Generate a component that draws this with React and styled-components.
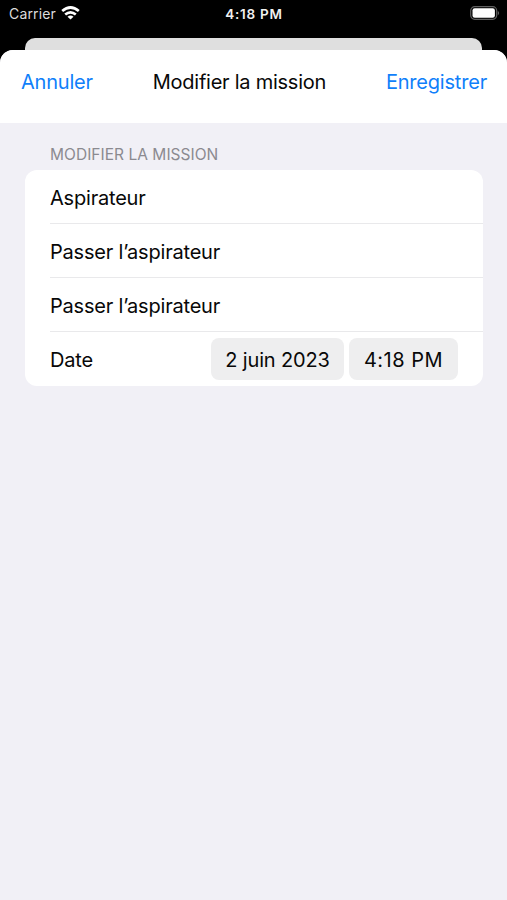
import React from 'react';
import styled, { createGlobalStyle } from 'styled-components';

const GlobalStyle = createGlobalStyle`
  * { box-sizing: border-box; }
  body { margin: 0; background: #000; font-family: Inter, "Liberation Sans", sans-serif; color: #080808; }
`;
const Screen = styled.div`
  height: 900px; display: flex; flex-direction: column; background: #000; overflow: hidden;
`;
const StatusBar = styled.header`
  height: 38px; flex: none; display: grid; grid-template-columns: 1fr auto 1fr; padding: 0 7px 0 9px; color: #fff; font-size: 13.5px; line-height: 28px;
`;
const Carrier = styled.div`
  display: flex; gap: 5px; height: 28px; color: #dcdcdc; font-size: 14px; letter-spacing: 0.15px;
`;
const Clock = styled.div`font-weight: 600; font-size: 13.5px; letter-spacing: 0.75px; color: #f0f0f0; margin-right: 1px;`;
const BatteryIcon = styled.svg`justify-self: end; margin-top: 6px;`;
const WifiIcon = styled.svg`margin-top: 6px;`;
const BackCard = styled.div`
  height: 12px; flex: none; margin: 0 25px; background: #dfdfdf; border-radius: 10px 10px 0 0;
`;
const Sheet = styled.main`
  flex: 1; background: #f1f0f6; border-radius: 13px 13px 0 0; overflow: hidden;
`;
const NavBar = styled.nav`
  height: 73px; display: flex; justify-content: space-between; background: #fff; padding: 16px 20px 0 21px; font-size: 20px; line-height: 32px;
`;
const NavAction = styled.button`
  border: 0; padding: 0; background: none; color: #107ffa; font: inherit; height: 32px;
  letter-spacing: -0.2px;
`;
const Title = styled.h1`margin: 0; font-size: inherit; font-weight: 400; letter-spacing: -0.25px;`;
const SectionLabel = styled.h2`
  margin: 21px 50px 0; height: 26px; font-size: 15.5px; line-height: 21px; font-weight: 400; letter-spacing: 0.03px; color: #8b8a90;
`;
const Group = styled.section`
  margin: 0 24px 0 25px; background: #fff; border-radius: 12px; overflow: hidden;
`;
const Row = styled.div`
  height: 54px; margin-left: 25px; padding-top: ${p => (p.$last ? 0 : '3px')}; display: flex; align-items: center; font-size: 20px; letter-spacing: -0.2px;
  border-bottom: ${p => (p.$last ? 0 : '1px solid #e9e9eb')};
`;
const Label = styled.span`line-height: 28px; padding-top: ${p => (p.$last ? '2px' : 0)};`;
const Pickers = styled.div`margin: 0 25px 0 auto; display: flex; gap: 5px;`;
const Picker = styled.button`
  border: 0; padding: 1px 0 0; width: ${p => p.$width}; height: 42px; border-radius: 8px; background: #eeeeef; font: inherit; color: #080808; letter-spacing: ${p => p.$spacing};
`;

export default function App() {
  return <><GlobalStyle /><Screen>
    <StatusBar>
      <Carrier><span>Carrier</span>
        <WifiIcon width="19" height="14" viewBox="0 0 19 14" fill="none" stroke="#fff" strokeWidth="2.7">
          <path d="M1.2 5 Q9.5 -2 17.8 5M4.2 8.5 Q9.5 4.1 14.8 8.5" /><path d="M6.5 10.7Q9.5 8.4 12.5 10.7L9.5 13.6Z" fill="#fff" stroke="none" />
        </WifiIcon>
      </Carrier>
      <Clock>4:18 PM</Clock>
      <BatteryIcon width="30" height="14" viewBox="0 0 30 14">
        <rect x=".7" y=".7" width="26" height="12.6" rx="4" fill="none" stroke="#606060" strokeWidth="1.2" /><rect x="2.5" y="2.3" width="22.4" height="9.4" rx="2.2" fill="#fff" /><path d="M27.8 4.7Q30.5 7 27.8 9.3Z" fill="#606060" />
      </BatteryIcon>
    </StatusBar>
    <BackCard />
    <Sheet>
      <NavBar><NavAction>Annuler</NavAction><Title>Modifier la mission</Title><NavAction>Enregistrer</NavAction></NavBar>
      <SectionLabel>MODIFIER LA MISSION</SectionLabel>
      <Group>
        <Row><Label>Aspirateur</Label></Row>
        <Row><Label>Passer l’aspirateur</Label></Row>
        <Row><Label>Passer l’aspirateur</Label></Row>
        <Row $last><Label $last>Date</Label><Pickers><Picker $width="133px" $spacing="-0.15px">2 juin 2023</Picker><Picker $width="109px" $spacing="0.5px">4:18 PM</Picker></Pickers></Row>
      </Group>
    </Sheet>
  </Screen></>;
}
